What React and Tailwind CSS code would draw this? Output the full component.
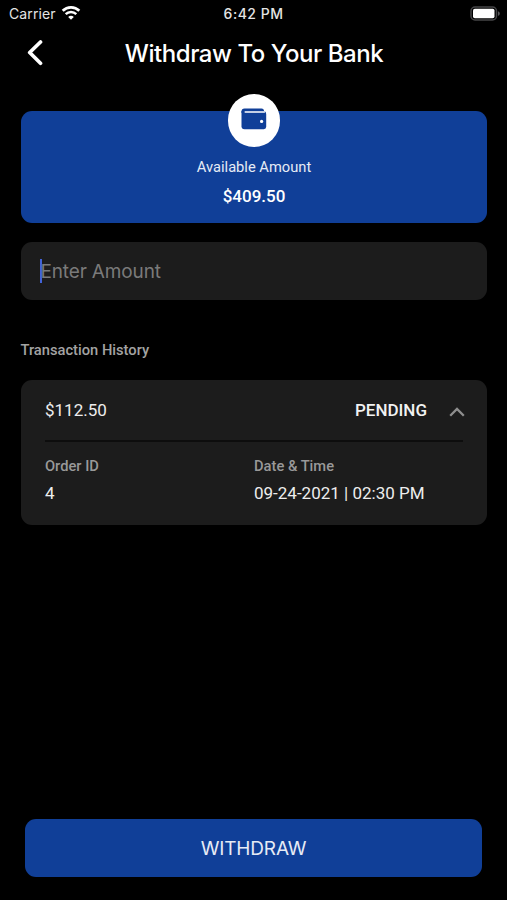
import { useState } from 'react'

const transactions = [
    {
        id: 4,
        amount: '$112.50',
        status: 'PENDING',
        date: '09-24-2021 | 02:30 PM',
    },
]

const WifiIcon = () => (
    <svg width="20" height="16" viewBox="0 0 20 16" className="-mt-0.5 ml-[5px] shrink-0" fill="none">
        <path d="M1.7 5.8 C6.3 1.2 13.7 1.2 18.3 5.8" stroke="#fff" strokeWidth="2.7" />
        <path d="M4.7 9.1 C7.6 6.2 12.4 6.2 15.3 9.1" stroke="#fff" strokeWidth="2.4" />
        <path d="M7.2 12 C8.8 10.4 11.2 10.4 12.8 12 L10 14.8 Z" fill="#fff" />
    </svg>
)

const BatteryIcon = () => (
    <svg width="31" height="15" viewBox="0 0 31 15" fill="none">
        <rect x="1" y="1" width="25.5" height="13" rx="4" stroke="#454547" strokeWidth="1.5" />
        <rect x="3" y="2.8" width="21.5" height="9.4" rx="1.8" fill="#fff" />
        <path d="M28 5.2 C30.4 6 30.4 9 28 9.8 Z" fill="#58585a" />
    </svg>
)

const WalletIcon = () => (
    <svg width="26" height="22" viewBox="0 0 26 22" fill="none">
        <path d="M3.5 0.5 H20.5 Q23 0.5 23 3 V5 H0.5 V3.5 Q0.5 0.5 3.5 0.5 Z" fill="#103f98" />
        <path d="M0.5 3 H23 Q25.2 3.4 25.2 6 V18.8 Q25.2 21.2 22.8 21.2 H3.5 Q0.5 21.2 0.5 18.2 Z" fill="#103f98" />
        <path d="M4.2 4.1 H23.4" stroke="#fff" strokeWidth="1.5" strokeLinecap="round" />
        <circle cx="20.6" cy="13.4" r="1.6" fill="#fff" />
    </svg>
)

const StatusBar = () => (
    <div className="grid h-[27px] grid-cols-3 items-center pl-[9px] pr-[9px] font-['Inter',sans-serif] text-[14px] text-[#e4e4e4]">
        <div className="flex items-center">
            <span className="tracking-[0.1px]">Carrier</span>
            <WifiIcon />
        </div>
        <span className="text-center text-[14px] font-medium tracking-[0.5px]">6:42 PM</span>
        <div className="-mr-[3px] flex justify-end">
            <BatteryIcon />
        </div>
    </div>
)

const TransactionCard = ({ transaction }) => {
    const [isOpen, setIsOpen] = useState(true)

    return (
        <div className="rounded-[11px] bg-[#1c1c1c] pr-[23.5px] pb-[21px] pl-[24.5px]">
            <button onClick={() => setIsOpen(!isOpen)} className="flex h-[60px] w-full items-center pt-px">
                <span className="text-[17px] text-[#ededed]">{transaction.amount}</span>
                <span className="ml-auto text-[17px] font-medium text-[#f2f2f2]">{transaction.status}</span>
                <svg
                    width="16"
                    height="10"
                    viewBox="0 0 16 10"
                    className={`-mr-0.5 ml-[22px] mt-0.5 ${isOpen ? '' : 'rotate-180'}`}
                    fill="none"
                >
                    <path d="M1.2 8.7 L8 1.9 L14.8 8.7" stroke="#8e8e8e" strokeWidth="2.3" />
                </svg>
            </button>

            {isOpen && (
                <div className="grid grid-cols-2 border-t-2 border-[#0d0d0d] pt-3.5">
                    <div>
                        <p className="text-[14.7px] leading-5 font-medium text-[#999999]">Order ID</p>
                        <p className="mt-1.5 text-[17px] leading-[22px] text-[#ededed]">{transaction.id}</p>
                    </div>
                    <div>
                        <p className="text-[14.7px] leading-5 font-medium text-[#999999]">Date &amp; Time</p>
                        <p className="mt-1.5 text-[17px] leading-[22px] text-[#ededed]">{transaction.date}</p>
                    </div>
                </div>
            )}
        </div>
    )
}

const App = () => {
    return (
        <div className="flex h-[900px] w-[507px] flex-col bg-black font-['Roboto',sans-serif] text-white">
            <StatusBar />

            {/* Header */}
            <header className="grid h-[52px] grid-cols-[60px_1fr_60px] items-center">
                <button className="pl-[26px]" aria-label="Back">
                    <svg width="18" height="26" viewBox="0 0 18 26" fill="none">
                        <path d="M14.5 2 L3.7 12.5 L14.5 23.3" stroke="#fff" strokeWidth="3.7" strokeLinecap="round" strokeLinejoin="round" />
                    </svg>
                </button>
                <h1 className="pt-0.5 pl-px text-center font-['Inter',sans-serif] text-[24px] font-medium tracking-[-0.45px]">
                    Withdraw To Your Bank
                </h1>
            </header>

            <main className="flex flex-1 flex-col px-[20.5px] pt-8 pb-[23px]">
                {/* Balance */}
                <section className="flex h-28 flex-col items-center rounded-[11px] bg-[#103f98] pl-px">
                    <div className="-mt-[17px] flex h-[52.5px] w-[52.5px] shrink-0 items-center justify-center rounded-full bg-white pb-0.5">
                        <WalletIcon />
                    </div>
                    <p className="mt-[10.5px] text-[14.7px] leading-5 text-[#e6ebf5]">Available Amount</p>
                    <p className="mt-2 text-[17px] leading-[22px] font-medium">$409.50</p>
                </section>

                <div className="mt-[19px] flex h-[58px] items-center rounded-[11px] bg-[#1c1c1c] pl-[19px]">
                    <div className="h-6 w-[2.5px] bg-[#4263d8]" />
                    <span className="-ml-[1.5px] pt-0.5 font-['Inter',sans-serif] text-[19px] tracking-[-0.15px] text-[#7a7a7a]">Enter Amount</span>
                </div>

                <h2 className="mt-10 mb-5 text-[14.7px] leading-5 font-medium text-[#a3a3a3]">Transaction History</h2>
                {transactions.map((transaction) => (
                    <TransactionCard key={transaction.id} transaction={transaction} />
                ))}

                <button className="mx-[4.5px] mt-auto h-[58px] rounded-[11px] bg-[#103f98] pt-0.5 font-['Inter',sans-serif] text-[19px] tracking-[-0.15px] text-[#e6ebf5]">
                    WITHDRAW
                </button>
            </main>
        </div>
    )
}

export default App
